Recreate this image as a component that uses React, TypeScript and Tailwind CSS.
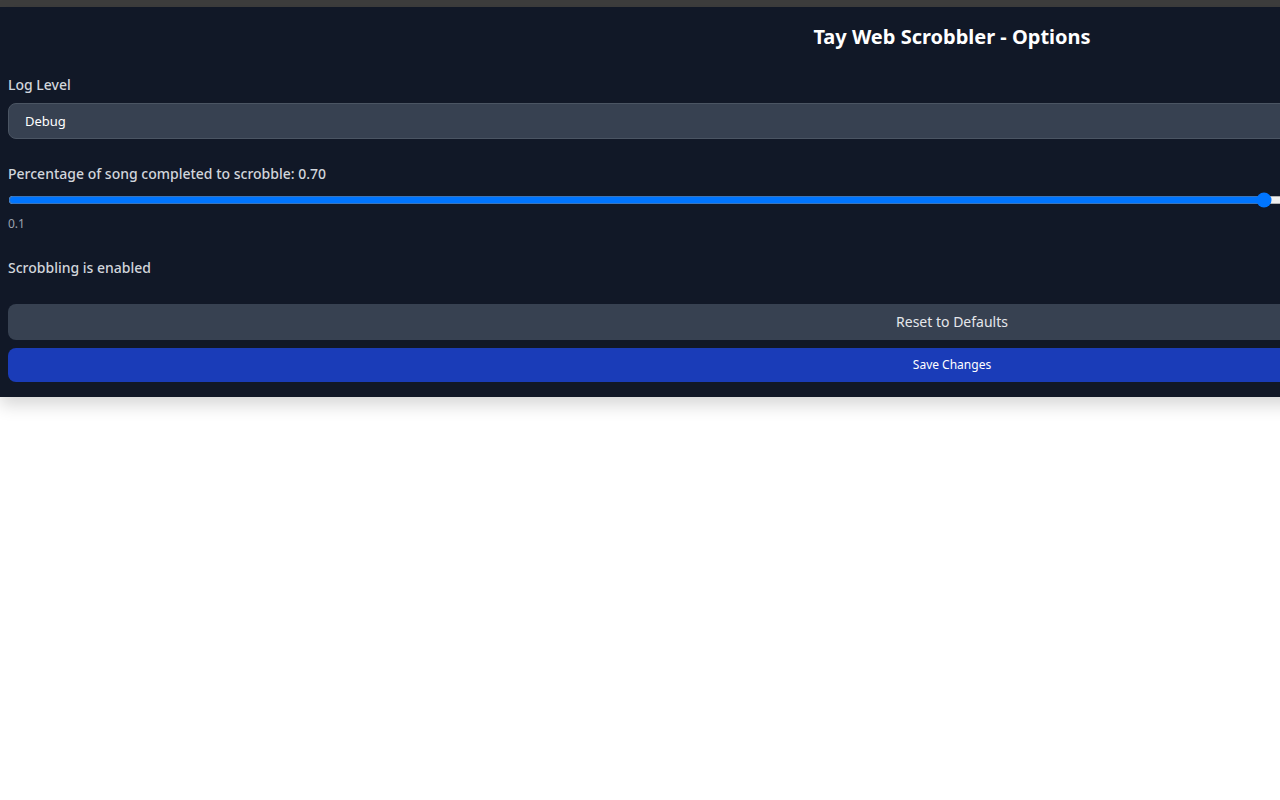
import React, { useState } from 'react'

const App = () => {
    const [level, setLevel] = useState('debug')
    const [pct, setPct] = useState(0.7)

    return (
        <div className="w-full overflow-hidden bg-white pb-6 font-['Noto_Sans',sans-serif]">
            <div className="h-[7px] bg-[#3d3d3d]" />
            <div className="w-[1904px] bg-[#111827] px-2 pt-4 pb-[15px] shadow-[0_8px_16px_rgba(0,0,0,0.16)]">
                <h1 className="text-center text-xl leading-7 font-bold text-white">
                    Tay Web Scrobbler - Options
                </h1>

                <div className="mt-6">
                    <label className="block text-sm leading-5 font-medium text-[#d1d5db]">Log Level</label>
                    <select
                        value={level}
                        onChange={(e) => setLevel(e.target.value)}
                        className="mt-2 block h-9 w-full appearance-none rounded-lg border border-[#4b5563] bg-[#374151] px-4 pt-[2px] text-[13px] text-white outline-none"
                    >
                        <option value="debug">Debug</option>
                        <option value="info">Info</option>
                        <option value="warn">Warn</option>
                        <option value="error">Error</option>
                    </select>
                </div>

                <div className="mt-[25px]">
                    <label className="block text-sm leading-5 font-medium text-[#d1d5db]">
                        Percentage of song completed to scrobble: {pct.toFixed(2)}
                    </label>
                    <input
                        type="range"
                        min={0.1}
                        max={1}
                        step={0.05}
                        value={pct}
                        onChange={(e) => setPct(parseFloat(e.target.value))}
                        className="mt-2 m-0 block h-4 w-full accent-[#0075ff]"
                    />
                    <div className="mt-2 text-xs leading-4 text-[#9ca3af]">0.1</div>
                </div>

                <p className="mt-[26px] text-sm leading-5 font-medium text-[#d1d5db]">Scrobbling is enabled</p>

                <button className="mt-[26px] block h-9 w-full rounded-lg bg-[#374151] text-sm text-[#e5e7eb]">
                    Reset to Defaults
                </button>
                <button className="mt-2 block h-[34px] w-full rounded-lg bg-[#1a3cb8] text-xs text-white">
                    Save Changes
                </button>
            </div>
        </div>
    )
}

export default App
